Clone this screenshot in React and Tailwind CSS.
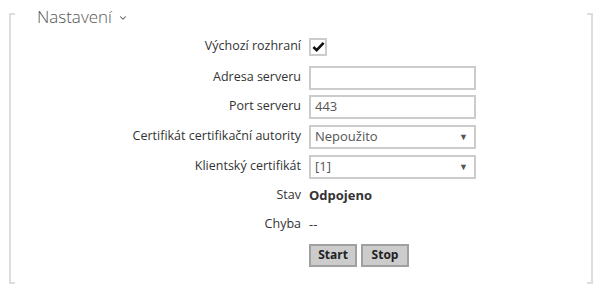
import { ChevronDown } from 'lucide-react';

function Row({ label, children, className = '' }) {
  return (
    <div className={`flex items-center ${className}`}>
      <div className="w-[301px] text-right text-[12.5px] text-[#333]">{label}</div>
      <div className="ml-2 flex items-center">{children}</div>
    </div>
  );
}

function Select({ value }) {
  return (
    <div className="w-[167px] h-[24px] border-2 border-[#ccc] flex items-center justify-between pl-[4px] pr-[6px] text-[13px] text-[#555]">
      <span>{value}</span>
      <span className="text-[9px] text-[#555]">▼</span>
    </div>
  );
}

export default function App() {
  return (
    <div className="w-[604px] h-[292px] bg-white relative font-['Open_Sans',sans-serif]">
      {/* bracket frame */}
      <div className="absolute left-[9px] top-[13px] bottom-[8px] w-[6px] border-l-2 border-t-2 border-b-2 border-[#ddd]" />
      <div className="absolute right-[11px] top-[13px] bottom-[8px] w-[6px] border-r-2 border-t-2 border-b-2 border-[#ddd]" />

      <div className="pt-[4px] pl-[37px] flex items-center text-[17px] text-[#555] font-light">
        <span>Nastavení</span>
        <ChevronDown className="w-[10px] h-[10px] ml-[6px] mt-[3px] text-[#555]" strokeWidth={2.5} />
      </div>

      <div className="flex flex-col">
        <Row label="Výchozí rozhraní" className="mt-[7px] h-[20px]">
          <div className="w-[18px] h-[18px] border-2 border-[#ccc] flex items-center justify-center">
            <svg viewBox="0 0 14 14" className="w-[13px] h-[13px]">
              <path d="M1.5 7.5 L5 11 L12.5 3" fill="none" stroke="#111" strokeWidth="2.8" />
            </svg>
          </div>
        </Row>
        <Row label="Adresa serveru" className="mt-[9px] h-[24px]">
          <div className="w-[167px] h-[24px] border-2 border-[#ccc]" />
        </Row>
        <Row label="Port serveru" className="mt-[5px] h-[24px]">
          <div className="w-[167px] h-[24px] border-2 border-[#ccc] flex items-center pl-[4px] text-[13px] text-[#555]">443</div>
        </Row>
        <Row label="Certifikát certifikační autority" className="mt-[6px] h-[24px]">
          <Select value="Nepoužito" />
        </Row>
        <Row label="Klientský certifikát" className="mt-[6px] h-[24px]">
          <Select value="[1]" />
        </Row>
        <Row label="Stav" className="mt-[5px] h-[24px]">
          <span className="text-[13px] font-bold text-[#333]">Odpojeno</span>
        </Row>
        <Row label="Chyba" className="mt-[5px] h-[24px]">
          <span className="text-[13px] text-[#333]">--</span>
        </Row>
        <div className="flex mt-[7px] ml-[309px] gap-[4px]">
          <button className="w-[48px] h-[23px] bg-[#ccc] border-2 border-[#a0a0a0] text-[12px] font-bold text-[#222]">Start</button>
          <button className="w-[48px] h-[23px] bg-[#ccc] border-2 border-[#a0a0a0] text-[12px] font-bold text-[#222]">Stop</button>
        </div>
      </div>
    </div>
  );
}
